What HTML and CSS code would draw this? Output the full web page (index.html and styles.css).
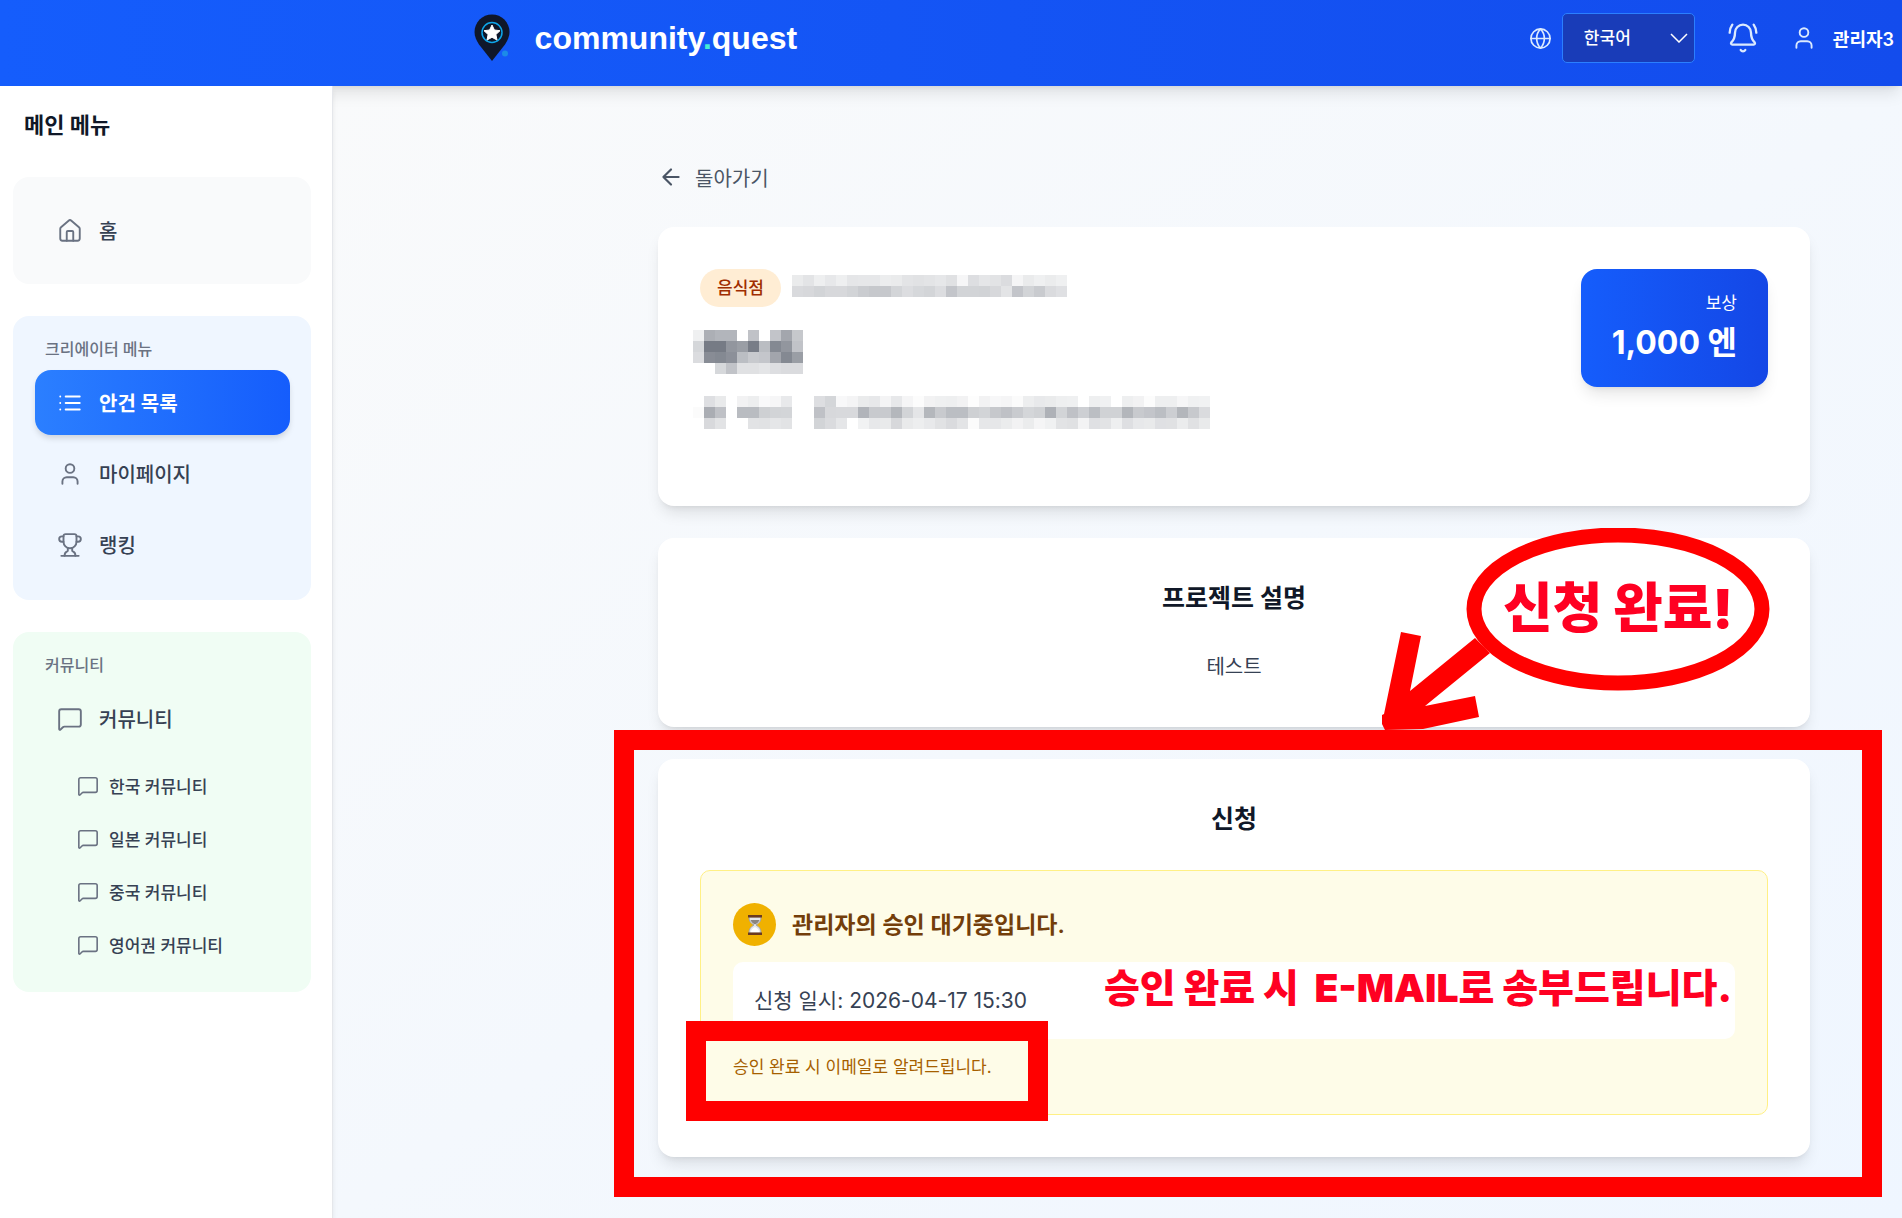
FILE: index.html
```html
<!DOCTYPE html>
<html lang="ko">

<head>
    <meta charset="UTF-8">
    <meta name="viewport" content="width=device-width, initial-scale=1.0">
    <title>community.quest</title>
    <link rel="stylesheet" href="styles.css">
</head>

<body>
    <!-- 공용 아이콘 -->
    <svg class="icon-defs" aria-hidden="true">
        <symbol id="icon-user" viewBox="0 0 24 24">
            <path d="M19 21v-2a4 4 0 0 0-4-4H9a4 4 0 0 0-4 4v2" />
            <circle cx="12" cy="7" r="4" />
        </symbol>
        <symbol id="icon-message" viewBox="0 0 24 24">
            <path d="M22 17a2 2 0 0 1-2 2H6.828a2 2 0 0 0-1.414.586l-2.202 2.202A.71.71 0 0 1 2 21.286V5a2 2 0 0 1 2-2h16a2 2 0 0 1 2 2z" />
        </symbol>
    </svg>

    <header class="header">
        <a href="#" class="brand">
            <svg class="brand-logo" viewBox="0 0 36 48">
                <path d="M18 0.5C8.300.5.5 8.300.5 18c0 4.500 2 8.500 4.500 12.500L18 47l13-16.500c2.500-4 4.500-8 4.500-12.500C35.500 8.300 27.700.5 18 .5z" fill="#0f172a" />
                <circle cx="18" cy="18.500" r="10" fill="none" stroke="#0ea5e9" stroke-width="1.500" />
                <path d="M18 11l2.400 5 5.600.7-4.100 3.800 1.100 5.500-5-2.700-5 2.700 1.100-5.500-4.100-3.800 5.600-.7z" fill="#fff" stroke="#fff" stroke-linejoin="round" />
                <circle cx="31" cy="39.500" r="3" fill="#1c8be8" />
            </svg>
            <span class="brand-name">community<span class="brand-dot">.</span>quest</span>
        </a>
        <div class="header-actions">
            <svg class="icon icon-globe" viewBox="0 0 24 24">
                <circle cx="12" cy="12" r="10" />
                <path d="M12 2a14.500 14.500 0 0 0 0 20 14.500 14.500 0 0 0 0-20M2 12h20" />
            </svg>
            <div class="language">
                <select class="language-select" aria-label="언어">
                    <option>한국어</option>
                    <option>日本語</option>
                    <option>English</option>
                </select>
                <svg class="language-arrow" viewBox="0 0 18 10"><path d="M1 1l8 8 8-8" /></svg>
            </div>
            <button class="bell-button" aria-label="알림">
                <svg class="icon icon-bell" viewBox="0 0 24 24">
                    <path d="M10.268 21a2 2 0 0 0 3.464 0" />
                    <path d="M22 8c0-2.300-.8-4.300-2-6" />
                    <path d="M3.262 15.326A1 1 0 0 0 4 17h16a1 1 0 0 0 .74-1.673C19.410 13.956 18 12.499 18 8A6 6 0 0 0 6 8c0 4.499-1.411 5.956-2.738 7.326" />
                    <path d="M4 2C2.800 3.700 2 5.700 2 8" />
                </svg>
            </button>
            <a href="#" class="user-link">
                <svg class="icon"><use href="#icon-user" /></svg>
                관리자3
            </a>
        </div>
    </header>

    <div class="layout">
        <aside class="sidebar">
            <h2 class="sidebar-title">메인 메뉴</h2>

            <nav class="menu menu-home">
                <a href="#" class="menu-item">
                    <svg class="icon" viewBox="0 0 24 24">
                        <path d="M15 21v-8a1 1 0 0 0-1-1h-4a1 1 0 0 0-1 1v8" />
                        <path d="M3 10a2 2 0 0 1 .709-1.528l7-5.999a2 2 0 0 1 2.582 0l7 5.999A2 2 0 0 1 21 10v9a2 2 0 0 1-2 2H5a2 2 0 0 1-2-2z" />
                    </svg>
                    홈
                </a>
            </nav>

            <nav class="menu menu-creator">
                <h3 class="menu-label">크리에이터 메뉴</h3>
                <a href="#" class="menu-item active">
                    <svg class="icon" viewBox="0 0 24 24">
                        <path d="M8 6h13M8 12h13M8 18h13M3 6h.01M3 12h.01M3 18h.01" />
                    </svg>
                    안건 목록
                </a>
                <a href="#" class="menu-item">
                    <svg class="icon"><use href="#icon-user" /></svg>
                    마이페이지
                </a>
                <a href="#" class="menu-item">
                    <svg class="icon" viewBox="0 0 24 24">
                        <path d="M6 9H4.500a2.500 2.500 0 0 1 0-5H6" />
                        <path d="M18 9h1.500a2.500 2.500 0 0 0 0-5H18" />
                        <path d="M4 22h16" />
                        <path d="M10 14.660V17c0 .55-.47.98-.97 1.210C7.850 18.750 7 20.240 7 22" />
                        <path d="M14 14.660V17c0 .55.47.98.97 1.210C16.150 18.750 17 20.240 17 22" />
                        <path d="M18 4a2 2 0 0 0-2-2H8a2 2 0 0 0-2 2v5a6 6 0 0 0 12 0z" />
                    </svg>
                    랭킹
                </a>
            </nav>

            <nav class="menu menu-community">
                <h3 class="menu-label">커뮤니티</h3>
                <a href="#" class="menu-item">
                    <svg class="icon"><use href="#icon-message" /></svg>
                    커뮤니티
                </a>
                <ul class="sub-menu">
                    <li><a href="#"><svg class="icon"><use href="#icon-message" /></svg>한국 커뮤니티</a></li>
                    <li><a href="#"><svg class="icon"><use href="#icon-message" /></svg>일본 커뮤니티</a></li>
                    <li><a href="#"><svg class="icon"><use href="#icon-message" /></svg>중국 커뮤니티</a></li>
                    <li><a href="#"><svg class="icon"><use href="#icon-message" /></svg>영어권 커뮤니티</a></li>
                </ul>
            </nav>
        </aside>

        <main class="main">
            <a href="#" class="back-link">
                <svg class="icon" viewBox="0 0 24 24"><path d="m12 19-7-7 7-7M19 12H5" /></svg>
                돌아가기
            </a>

            <section class="card summary">
                <div class="summary-info">
                    <div class="summary-head">
                        <span class="badge">음식점</span>
                        <svg class="mosaic" data-mosaic="company"></svg>
                    </div>
                    <div class="summary-body">
                        <svg class="mosaic" data-mosaic="title"></svg>
                        <svg class="mosaic" data-mosaic="address"></svg>
                    </div>
                </div>
                <div class="reward">
                    <span class="reward-label">보상</span>
                    <strong class="reward-value">1,000 엔</strong>
                </div>
            </section>

            <section class="card description">
                <h2 class="card-title">프로젝트 설명</h2>
                <p class="card-text">테스트</p>
                <div class="callout">
                    <svg class="callout-shape" viewBox="0 0 390 206">
                        <ellipse cx="237" cy="81" rx="144" ry="74" fill="none" stroke="#f00" stroke-width="15" />
                        <path d="M94 110L29 163L40 108L20 104L3 186L1 187L1 196L4 202L42 201L98 189L94 168L44 178L109 125z" fill="#f00" />
                    </svg>
                    <span class="callout-text">신청 완료!</span>
                </div>
            </section>

            <section class="card application">
                <h2 class="card-title">신청</h2>
                <div class="status">
                    <div class="status-head">
                        <span class="status-icon">
                            <svg viewBox="0 0 16 22">
                                <path d="M2 3h12c0 4-1.500 6-5 8 3.500 2 5 4 5 8H2c0-4 1.500-6 5-8-3.500-2-5-4-5-8z" fill="#e5e7eb" stroke="#a3a3a3" />
                                <path d="M3.500 6h9c-.6 1.800-2 3.200-4.500 4.500C5.500 9.200 4.100 7.800 3.500 6z" fill="#8b8580" />
                                <path d="M8 13c2.500 1 4 3 4.500 5.500h-9C4 16 5.500 14 8 13z" fill="#fff" />
                                <path d="M1 1h14v2.500H1zM1 18.500h14V21H1z" fill="#6b3a20" />
                            </svg>
                        </span>
                        <h3 class="status-title">관리자의 승인 대기중입니다.</h3>
                    </div>
                    <div class="status-date">
                        신청 일시: 2026-04-17 15:30
                        <span class="mail-text">승인 완료 시  E-MAIL로 송부드립니다.</span>
                    </div>
                    <p class="status-note">승인 완료 시 이메일로 알려드립니다.</p>
                </div>
            </section>
        </main>
    </div>

    <script src="script.js"></script>
</body>

</html>
```
FILE: styles.css
```css
* {
    box-sizing: border-box;
}

body {
    margin: 0;
    font-family: Inter, 'Noto Sans CJK KR', sans-serif;
    font-size: 20px;
    color: #364153;
    background-color: white;
}

h2,
h3,
p,
ul {
    margin: 0;
    padding: 0;
}

a {
    color: inherit;
    text-decoration: none;
}

.icon-defs {
    position: absolute;
    width: 0;
    height: 0;
}

.icon {
    width: 26px;
    height: 26px;
    flex-shrink: 0;
    fill: none;
    stroke: currentColor;
    stroke-width: 1.75;
    stroke-linecap: round;
    stroke-linejoin: round;
}

/* 헤더 */
.header {
    position: relative;
    z-index: 1;
    display: flex;
    align-items: flex-start;
    justify-content: space-between;
    height: 86px;
    padding: 13px 8px 0 24.9%;
    background: linear-gradient(to right, #155dfc, #134ced);
    box-shadow: 0 10px 15px -3px rgba(0, 0, 0, 0.1), 0 4px 6px -4px rgba(0, 0, 0, 0.1);
}

.brand {
    display: flex;
    align-items: center;
    gap: 25px;
    height: 50px;
    color: white;
}

.brand-logo {
    width: 36px;
    height: 48px;
}

.brand-name {
    font-family: 'Liberation Sans', sans-serif;
    font-size: 32px;
    font-weight: bold;
}

.brand-dot {
    color: #46edd5;
}

.header-actions {
    display: flex;
    align-items: center;
    height: 50px;
    color: #dbeafe;
}

.header .icon-globe {
    width: 23px;
    height: 23px;
    margin-right: 10px;
}

.language {
    position: relative;
    margin-right: 32px;
}

.language-select {
    appearance: none;
    display: block;
    width: 133px;
    height: 50px;
    padding: 0 21px;
    border: 1px solid #2b7fff;
    border-radius: 5px;
    background-color: #193cb8;
    color: white;
    font-family: inherit;
    font-size: 17px;
    font-weight: 500;
}

.language-arrow {
    position: absolute;
    top: 20px;
    right: 7px;
    width: 18px;
    height: 10px;
    fill: none;
    stroke: white;
    stroke-width: 1.5;
    pointer-events: none;
}

.bell-button {
    display: flex;
    padding: 0;
    margin-right: 32px;
    border: none;
    background: none;
    color: inherit;
    cursor: pointer;
}

.icon-bell {
    width: 32px;
    height: 32px;
}

.user-link {
    display: flex;
    align-items: center;
    gap: 16px;
    color: white;
    font-size: 18px;
    font-weight: 600;
}

.user-link .icon {
    color: #dbeafe;
}

/* 사이드바 */
.layout {
    display: flex;
    min-height: calc(100vh - 86px);
}

.sidebar {
    position: relative;
    z-index: 2;
    flex: 0 0 333px;
    padding: 20px 21px 32px 13px;
    border-right: 1px solid #e5e7eb;
    background-color: white;
    box-shadow: 0 4px 6px -1px rgba(0, 0, 0, 0.1);
}

.sidebar-title {
    margin: 0 11px 33px;
    color: #101828;
    font-size: 22px;
    line-height: 38px;
}

.menu {
    display: flex;
    flex-direction: column;
    gap: 6px;
    margin-bottom: 32px;
    padding: 21px 21px 21px 22px;
    border-radius: 16px;
}

.menu-home {
    background-color: #f9fafb;
}

.menu-creator {
    padding-bottom: 23px;
    background-color: #eff6ff;
}

.menu-community {
    background-color: #f0fdf4;
}

.menu-label {
    margin: 0 0 3px 10px;
    color: #6a7282;
    font-size: 16px;
    font-weight: 500;
    line-height: 24px;
}

.menu-item {
    display: flex;
    align-items: center;
    gap: 16px;
    height: 65px;
    padding: 0 22px;
    border-radius: 16px;
    font-weight: 500;
}

.menu .icon {
    color: #6a7282;
}

.menu-item.active {
    background: linear-gradient(to right, #2b7fff, #155dfc);
    box-shadow: 0 4px 6px -1px rgba(0, 0, 0, 0.15);
    color: white;
    font-weight: 600;
}

.menu-item.active .icon {
    color: white;
}

.sub-menu {
    list-style: none;
    margin-top: 2px;
    padding-left: 42px;
}

.sub-menu a {
    display: flex;
    align-items: center;
    gap: 10px;
    height: 53px;
    font-size: 17px;
    font-weight: 500;
}

.sub-menu .icon {
    width: 22px;
    height: 22px;
}

/* 본문 */
.main {
    flex: 1;
    padding: 73px 92px 28px 325px;
    background: linear-gradient(to bottom right, #f9fafb, #eff6ff);
}

.back-link {
    display: flex;
    align-items: center;
    gap: 11px;
    width: fit-content;
    height: 36px;
    margin-bottom: 32px;
    color: #4a5565;
}

.back-link .icon {
    stroke-width: 2;
}

.card {
    position: relative;
    margin-bottom: 32px;
    padding: 42px;
    border-radius: 16px;
    background-color: white;
    box-shadow: 0 10px 15px -3px rgba(0, 0, 0, 0.1), 0 4px 6px -4px rgba(0, 0, 0, 0.1);
}

.card-title {
    margin-bottom: 32px;
    color: #101828;
    font-size: 25px;
    line-height: 37px;
    text-align: center;
}

.card-text {
    line-height: 36px;
    text-align: center;
}

.summary {
    display: flex;
    justify-content: space-between;
    align-items: flex-start;
    min-height: 279px;
}

.summary-head {
    display: flex;
    align-items: flex-start;
    gap: 11px;
}

.summary-head .mosaic {
    margin-top: 6px;
}

.badge {
    padding: 0 17px;
    border-radius: 19px;
    background-color: #ffedd4;
    color: #9f2d00;
    font-size: 17px;
    font-weight: 500;
    line-height: 38px;
}

/* 모자이크 칸이 글자 영역보다 왼쪽에서 시작함 */
.summary-body {
    display: flex;
    flex-direction: column;
    gap: 22px;
    margin: 23px 0 0 -7px;
}

.mosaic {
    display: block;
    shape-rendering: crispEdges;
}

.reward {
    display: flex;
    flex-direction: column;
    align-items: flex-end;
    padding: 20px 31px 18px;
    border-radius: 16px;
    background: linear-gradient(to right, #155dfc, #1447e6);
    box-shadow: 0 10px 15px -3px rgba(0, 0, 0, 0.1), 0 4px 6px -4px rgba(0, 0, 0, 0.1);
    color: white;
}

.reward-label {
    font-size: 17px;
    line-height: 28px;
}

.reward-value {
    font-size: 32px;
    line-height: 52px;
}

.status {
    padding: 32px;
    border: 1px solid #fff085;
    border-radius: 10px;
    background-color: #fefce8;
}

.status-head {
    display: flex;
    align-items: center;
    gap: 16px;
    margin-bottom: 16px;
}

.status-icon {
    display: flex;
    align-items: center;
    justify-content: center;
    width: 43px;
    height: 43px;
    border-radius: 50%;
    background-color: #f0b100;
}

.status-icon svg {
    width: 16px;
    height: 22px;
}

.status-title {
    padding-bottom: 4px;
    color: #733e0a;
    font-size: 23px;
    font-weight: 600;
}

.status-date {
    position: relative;
    padding: 20px 21px;
    border-radius: 10px;
    background-color: white;
    font-size: 21px;
    line-height: 37px;
}

.status-note {
    position: relative;
    width: fit-content;
    margin-top: 13px;
    color: #a65f00;
    font-size: 17px;
    line-height: 30px;
}

/* 안내 표시 */
.callout {
    position: absolute;
    right: 33px;
    bottom: -10px;
    width: 396px;
    height: 209px;
}

.callout-shape {
    display: block;
    width: 390px;
    height: 206px;
}

.callout-text {
    position: absolute;
    top: 41px;
    left: 122px;
    color: #ff0022;
    font-size: 54px;
    font-weight: 900;
    line-height: 80px;
    white-space: nowrap;
}

.mail-text {
    position: absolute;
    top: -4px;
    right: 3px;
    color: #ff0022;
    font-size: 39px;
    font-weight: 900;
    line-height: 60px;
    white-space: pre;
}

.application::after {
    content: '';
    position: absolute;
    inset: -29px -72px -40px -44px;
    border: 20px solid #f00;
    pointer-events: none;
}

.status-note::after {
    content: '';
    position: absolute;
    inset: -31px -56px -39px -47px;
    border: 20px solid #f00;
    pointer-events: none;
}
```
FILE: script.js
```javascript
// 모자이크 한 칸의 크기
const CELL = 11;

// 칸마다 밝기(16진수), --는 빈 칸
const mosaics = {
    company: [
        'ea e3 ee e7 ee e5 e6 e6 ec ea e3 e1 e3 e6 e0 f6 dd e5 e2 db f5 ea ef eb ef',
        'd9 d7 d2 d7 d7 d2 ca c6 c6 d3 dc d6 d3 dc c3 d2 d2 d1 d7 e3 c3 d2 c9 da df'
    ],
    title: [
        'ef ac b2 b2 -- c0 -- c2 a3 c6',
        'd5 76 76 92 9a 78 ba 84 92 c1',
        'db 88 84 8c bb c8 c4 a2 84 9a',
        '-- -- d6 c1 e0 e0 e4 dd da da'
    ],
    address: [
        '-- de e9 -- f2 ed f9 f6 e8 -- -- dd d4 f8 f4 ea e7 f4 e7 f5 fc f2 ef ee f2 fd f2 f7 f5 fb ed e8 ea ee ef -- ee f0 -- ee f2 fc ee ee f6 f0 f1',
        'fb aa bf -- b9 b9 ce d2 d3 -- -- bf d7 d8 d8 b1 c8 c8 b4 d2 e4 b4 c8 bb bb ce d2 c6 bf c9 d4 d0 ae d2 bf cd bb d0 d0 b3 c8 c3 bb cc b3 c7 da',
        '-- d8 e2 -- -- e2 e1 e5 e2 -- -- d2 da e5 -- f1 e7 e9 d7 e9 ed e8 e1 da e3 fb e6 e6 eb f2 eb f5 f0 e2 e0 f3 df e2 ee de e7 e9 df e0 eb e0 e9'
    ]
};

document.querySelectorAll('.mosaic').forEach(svg => {
    const rows = mosaics[svg.dataset.mosaic].map(row => row.split(' '));
    svg.setAttribute('width', rows[0].length * CELL);
    svg.setAttribute('height', rows.length * CELL);

    rows.forEach((row, y) => {
        row.forEach((cell, x) => {
            if (cell === '--') return;
            const level = parseInt(cell, 16);
            // 어두운 칸일수록 푸른 기를 더함
            const tint = Math.round((255 - level) / 9);
            const rect = document.createElementNS('http://www.w3.org/2000/svg', 'rect');
            rect.setAttribute('x', x * CELL);
            rect.setAttribute('y', y * CELL);
            rect.setAttribute('width', CELL);
            rect.setAttribute('height', CELL);
            rect.setAttribute('fill', `rgb(${level}, ${level + Math.round(tint / 3)}, ${level + tint})`);
            svg.appendChild(rect);
        });
    });
});
```
